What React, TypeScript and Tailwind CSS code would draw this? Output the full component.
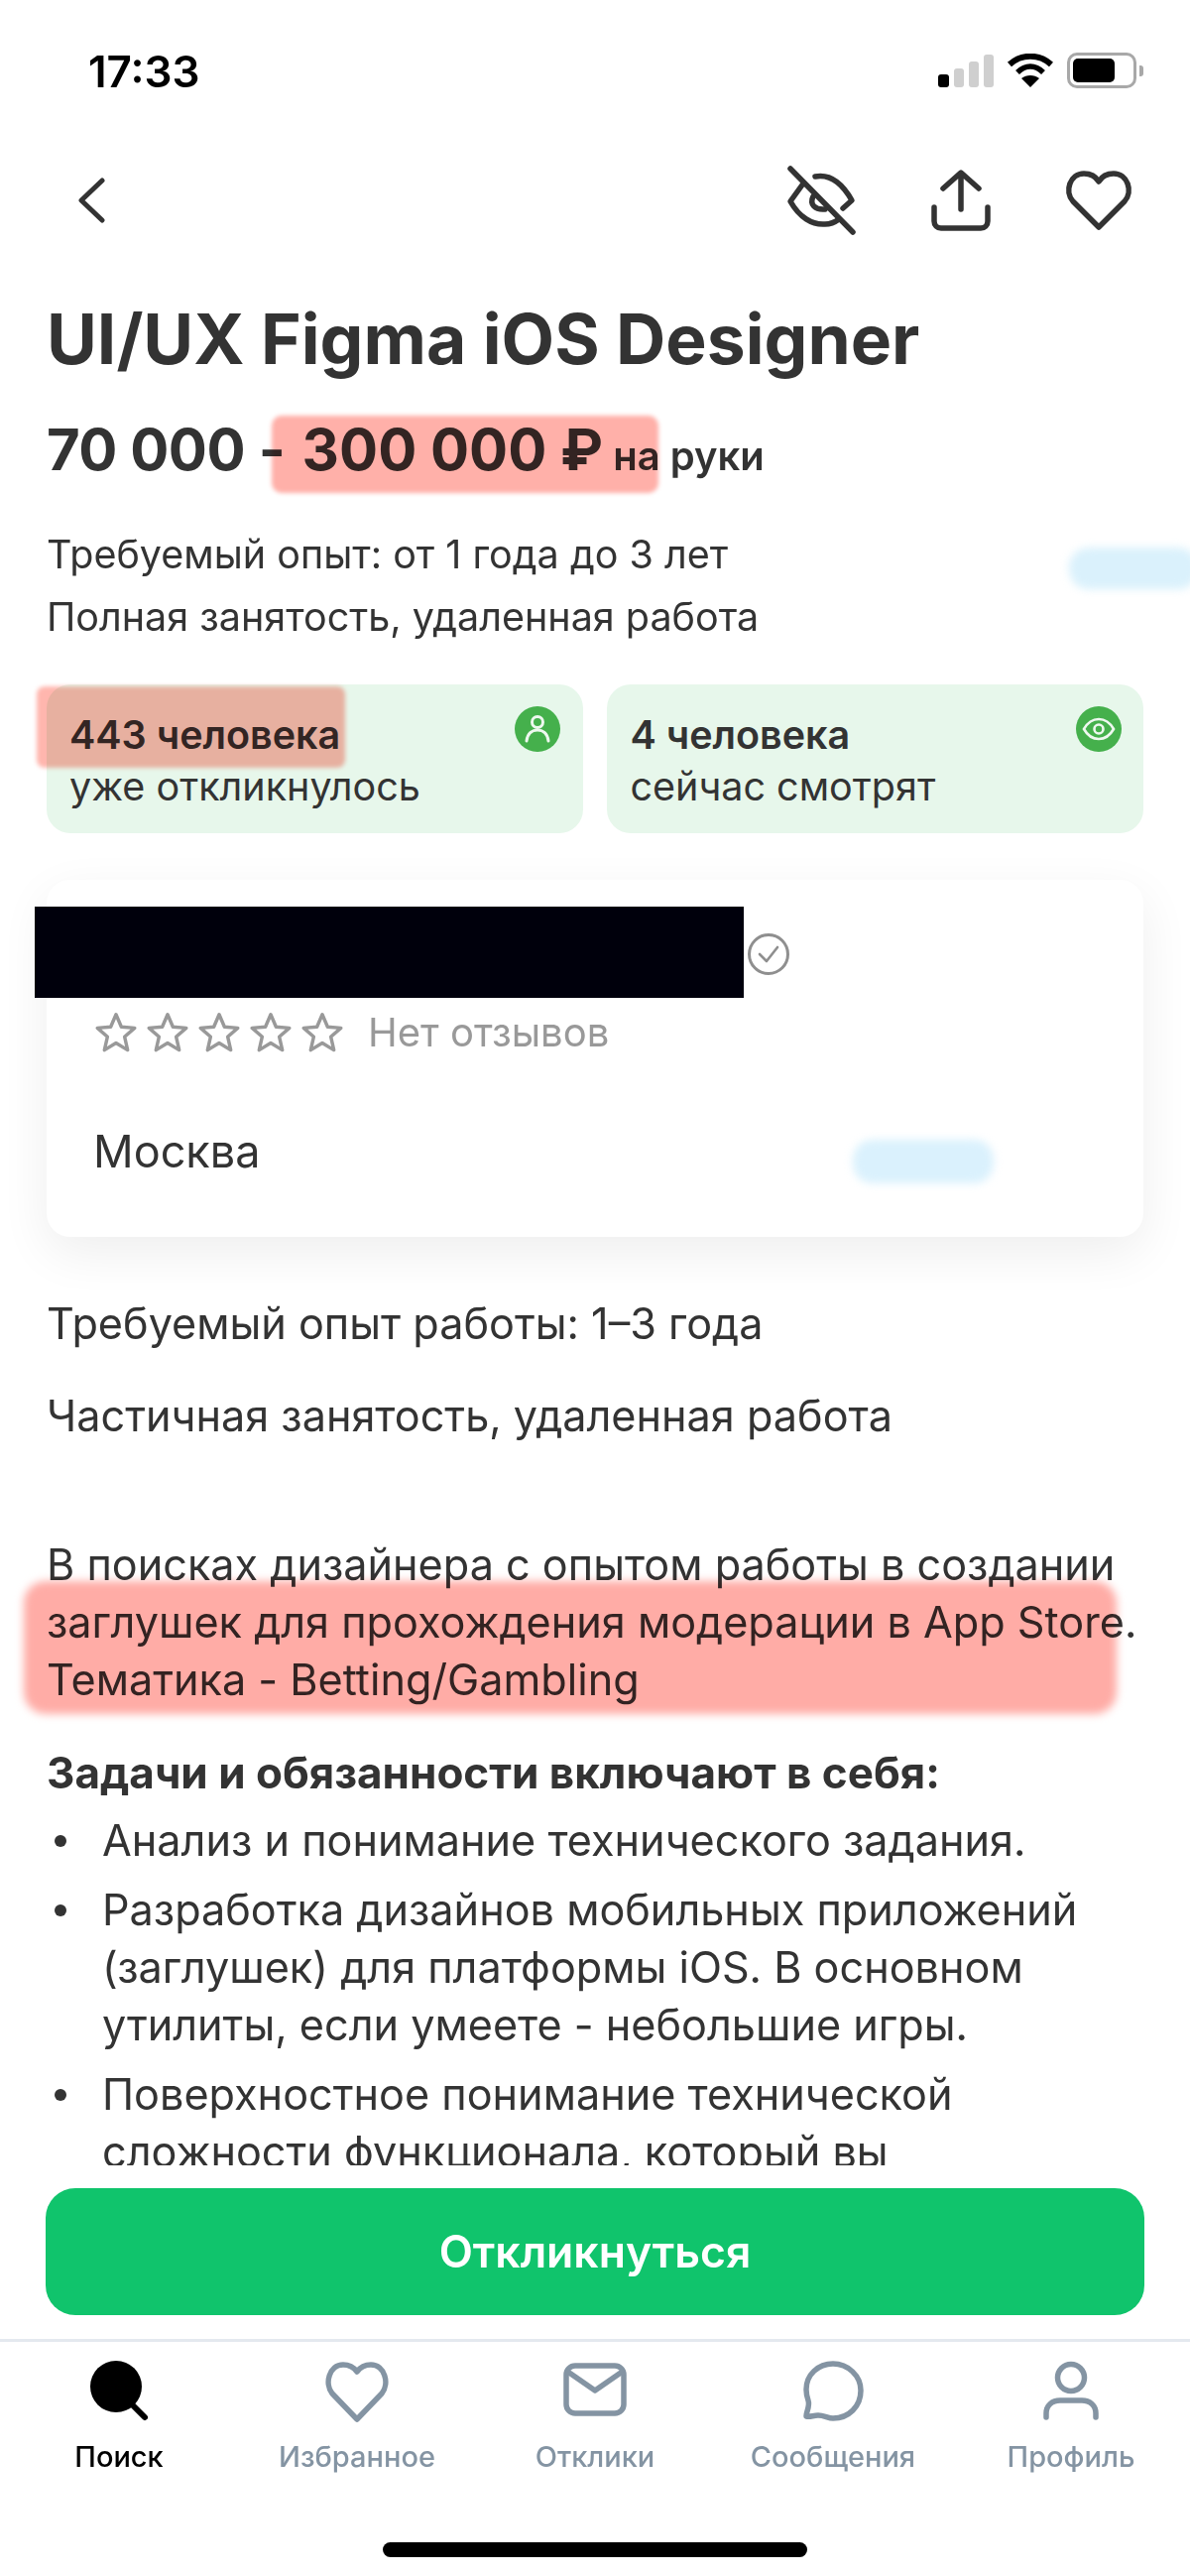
import React from 'react';

const tabs = ['Поиск', 'Избранное', 'Отклики', 'Сообщения', 'Профиль'];

const TabIcon = ({ index }: { index: number }) => {
  if (index === 0) {
    return (
      <svg width="64" height="64" viewBox="0 0 64 64" fill="none">
        <circle cx="29" cy="27" r="26" fill="#000" />
        <path d="M46 46 L58 58" stroke="#000" strokeWidth="6" strokeLinecap="round" />
      </svg>
    );
  }
  if (index === 1) {
    return (
      <svg width="64" height="64" viewBox="0 0 64 64" fill="none" stroke="#8494a3" strokeWidth="5.5" strokeLinejoin="round">
        <path d="M32 60 L7 34 C-1 24 4 5 18 5 C25 5 29 8 32 12 C35 8 39 5 46 5 C60 5 65 24 57 34 Z" />
      </svg>
    );
  }
  if (index === 2) {
    return (
      <svg width="64" height="64" viewBox="0 0 64 64" fill="none" stroke="#8494a3" strokeWidth="5.5" strokeLinejoin="round" strokeLinecap="round">
        <rect x="3" y="6" width="58" height="48" rx="9" />
        <path d="M6 13 L32 31 L58 13" />
      </svg>
    );
  }
  if (index === 3) {
    return (
      <svg width="64" height="64" viewBox="0 0 64 64" fill="none" stroke="#8494a3" strokeWidth="5.5" strokeLinejoin="round">
        <path d="M5 57 C5 52 9 47 7 41 C6 38 5 34 5 30 C5 15 17 4 32 4 C47 4 60 16 60 31 C60 47 48 59 32 59 C27 59 23 56 17 56 C12 56 9 58 5 57 Z" />
      </svg>
    );
  }
  return (
    <svg width="64" height="64" viewBox="0 0 64 64" fill="none" stroke="#8494a3" strokeWidth="5.5" strokeLinecap="round">
      <circle cx="32" cy="18" r="13.5" />
      <path d="M7 58 V54 C7 46 13 41 21 41 H43 C51 41 57 46 57 54 V58" />
    </svg>
  );
};

const Star = () => (
  <svg width="46" height="46" viewBox="0 0 24 24" fill="none" stroke="#999" strokeWidth="1.8" strokeLinejoin="round">
    <path d="M12 2.5 L14.8 9 L21.8 9.6 L16.5 14.2 L18.1 21.2 L12 17.5 L5.9 21.2 L7.5 14.2 L2.2 9.6 L9.2 9 Z" />
  </svg>
);

const Bullet = ({ children }: { children: React.ReactNode }) => (
  <li className="flex">
    <span className="mt-[24px] ml-[8px] w-[12px] h-[12px] shrink-0 rounded-full bg-[#333]" />
    <span className="ml-[36px]">{children}</span>
  </li>
);

export default function App() {
  return (
    <div className="relative w-[1200px] h-[2597px] flex flex-col overflow-hidden bg-white text-[#333] font-['Inter',sans-serif]">
      {/* status bar */}
      <div className="h-[120px] flex items-start justify-between pt-[48px] pl-[89px] pr-[47px]">
        <span className="text-[44px] leading-[48px] font-semibold text-black">17:33</span>
        <div className="flex items-center gap-[14px] pt-[5px]">
          <div className="flex items-end gap-[5px] h-[34px]">
            <div className="w-[11px] h-[13px] rounded-[3px] bg-black" />
            <div className="w-[10px] h-[19px] rounded-[3px] bg-[#cfcfcf]" />
            <div className="w-[10px] h-[26px] rounded-[3px] bg-[#cfcfcf]" />
            <div className="w-[10px] h-[33px] rounded-[3px] bg-[#cfcfcf]" />
          </div>
          <svg width="46" height="34" viewBox="0 0 46 34" fill="none">
            <path d="M2 11 C14 0 32 0 44 11" stroke="#000" strokeWidth="6" />
            <path d="M10 19 C18 11 28 11 36 19" stroke="#000" strokeWidth="5.5" />
            <path d="M23 34 L14 25 C19 21 27 21 32 25 Z" fill="#000" />
          </svg>
          <div className="flex items-center gap-[3px]">
            <div className="w-[70px] h-[36px] rounded-[10px] border-[3px] border-[#a8a8a8] p-[3px]">
              <div className="w-[42px] h-full rounded-[5px] bg-black" />
            </div>
            <div className="w-[4px] h-[11px] rounded-r-[3px] bg-[#a8a8a8]" />
          </div>
        </div>
      </div>

      {/* nav */}
      <div className="h-[164px] flex items-center justify-between pl-[76px] pr-[58px]">
        <svg width="32" height="46" viewBox="0 0 32 46" fill="none" stroke="#333" strokeWidth="5" strokeLinecap="round" strokeLinejoin="round">
          <path d="M27 3 L6 23 L27 43" />
        </svg>
        <div className="flex items-center">
          <svg width="72" height="72" viewBox="0 0 72 72" fill="none" stroke="#333" strokeWidth="5.5" strokeLinecap="round" strokeLinejoin="round">
            <path d="M5 4 L68 68" />
            <path d="M30 12 C46 9 58 20 67 36 L58 44" />
            <path d="M18 19 L5 37 C14 53 27 61 40 60 C46 60 50 58 54 55" />
            <path d="M28 32 C24 40 30 46 40 45" />
          </svg>
          <svg className="ml-[75px]" width="60" height="62" viewBox="0 0 60 62" fill="none" stroke="#333" strokeWidth="5.5" strokeLinecap="round" strokeLinejoin="round">
            <path d="M30 40 V4 M12 19 L30 3 L48 19" />
            <path d="M3 38 V52 C3 56 6 59 10 59 H50 C54 59 57 56 57 52 V38" />
          </svg>
          <svg className="ml-[75px]" width="68" height="62" viewBox="0 0 68 62" fill="none" stroke="#333" strokeWidth="5.5" strokeLinejoin="round">
            <path d="M34 58 L8 32 C-1 22 5 4 19 4 C26 4 31 7 34 12 C37 7 42 4 49 4 C63 4 69 22 60 32 Z" />
          </svg>
        </div>
      </div>

      {/* scroll area */}
      <div className="h-[1899px] overflow-hidden px-[47px] pt-[18px]">
        <h1 className="text-[69.5px] leading-[80px] font-bold whitespace-nowrap">UI/UX Figma iOS Designer</h1>

        <div className="relative mt-[36px] h-[70px] leading-[70px] font-bold whitespace-nowrap">
          <span className="text-[58px] tracking-[-0.5px]">70 000</span>
          <span className="text-[58px]"> - </span>
          <span className="ml-[3px] text-[58px]">300 000 ₽</span>
          <span className="text-[40px] font-semibold"> на руки</span>
          <div className="absolute left-[227px] top-[1px] w-[390px] h-[78px] rounded-[10px] bg-[#ffb0a9] mix-blend-multiply blur-[2px]" />
        </div>

        <div className="mt-[40px] text-[39.5px] leading-[63px]">
          <p>Требуемый опыт: от 1 года до 3 лет</p>
          <p>Полная занятость, удаленная работа</p>
        </div>
        <div className="absolute left-[1078px] top-[552px] w-[130px] h-[42px] rounded-[20px] bg-[#daf1fc] blur-[4px]" />

        <div className="mt-[36px] flex gap-[24px]">
          <div className="relative flex-1 h-[150px] rounded-[24px] bg-[#e7f7eb] pl-[23px] pt-[25px]">
            <p className="text-[39.5px] leading-[52px] font-semibold">443 человека</p>
            <p className="text-[39.5px] leading-[52px]">уже откликнулось</p>
            <div className="absolute right-[23px] top-[22px] w-[46px] h-[46px] rounded-full bg-[#45b04c] flex items-center justify-center">
              <svg width="26" height="30" viewBox="0 0 26 30" fill="none" stroke="#eef8ef" strokeWidth="3" strokeLinecap="round">
                <circle cx="13" cy="8" r="5.5" />
                <path d="M2 27 C3 19 8 16 13 16 C18 16 23 19 24 27" />
              </svg>
            </div>
            <div className="absolute left-[-10px] top-[2px] w-[311px] h-[82px] rounded-[8px] bg-[#ffb6ae] mix-blend-multiply blur-[2px]" />
          </div>
          <div className="relative flex-1 h-[150px] rounded-[24px] bg-[#e7f7eb] pl-[24px] pt-[25px]">
            <p className="text-[39.5px] leading-[52px] font-semibold">4 человека</p>
            <p className="text-[39.5px] leading-[52px]">сейчас смотрят</p>
            <div className="absolute right-[22px] top-[22px] w-[46px] h-[46px] rounded-full bg-[#45b04c] flex items-center justify-center">
              <svg width="34" height="24" viewBox="0 0 34 24" fill="none" stroke="#eef8ef" strokeWidth="2.6">
                <path d="M2 12 C6 5 11 2 17 2 C23 2 28 5 32 12 C28 19 23 22 17 22 C11 22 6 19 2 12 Z" />
                <circle cx="17" cy="12" r="4.5" />
              </svg>
            </div>
          </div>
        </div>

        <div className="relative mt-[47px] h-[360px] rounded-[24px] bg-white shadow-[0_16px_50px_rgba(0,0,0,0.07)] pl-[47px] pt-[130px]">
          <div className="absolute left-[-12px] top-[27px] w-[715px] h-[92px] bg-[#00000c]" />
          <svg className="absolute left-[706px] top-[53px]" width="44" height="44" viewBox="0 0 44 44" fill="none" stroke="#8f8f8f">
            <circle cx="22" cy="22" r="19.5" strokeWidth="3" />
            <path d="M13 22 L20 29 L31 15" strokeWidth="2.6" strokeLinecap="round" strokeLinejoin="round" />
          </svg>
          <div className="flex items-center h-[48px]">
            <div className="flex gap-[6px]">
              <Star />
              <Star />
              <Star />
              <Star />
              <Star />
            </div>
            <span className="ml-[23px] text-[40px] leading-[48px] text-[#999]">Нет отзывов</span>
          </div>
          <p className="mt-[69px] text-[45px] leading-[54px]">Москва</p>
          <div className="absolute left-[813px] top-[262px] w-[142px] h-[44px] rounded-[20px] bg-[#daf1fd] blur-[4px]" />
        </div>

        <div className="text-[43.2px] leading-[58px]">
          <p className="mt-[58px]">Требуемый опыт работы: 1–3 года</p>
          <p className="mt-[35px]">Частичная занятость, удаленная работа</p>
          <div className="relative mt-[92px]">
            <p className="w-[1130px]">В поисках дизайнера с опытом работы в создании заглушек для прохождения модерации в App Store. Тематика - Betting/Gambling</p>
            <div className="absolute left-[-23px] top-[46px] w-[1102px] h-[134px] rounded-[22px] bg-[#ffaca6] mix-blend-multiply blur-[4px]" />
          </div>
          <p className="mt-[36px] text-[44px] font-bold">Задачи и обязанности включают в себя:</p>
          <ul className="mt-[10px] flex flex-col gap-[12px]">
            <Bullet>Анализ и понимание технического задания.</Bullet>
            <Bullet>Разработка дизайнов мобильных приложений (заглушек) для платформы iOS. В основном утилиты, если умеете - небольшие игры.</Bullet>
            <Bullet>Поверхностное понимание технической сложности функционала, который вы</Bullet>
          </ul>
        </div>
      </div>

      {/* action */}
      <div className="pt-[23px] px-[46px]">
        <button className="w-full h-[128px] rounded-[30px] bg-[#10c46c] text-white text-[44.5px] font-semibold">Откликнуться</button>
      </div>

      {/* tab bar */}
      <div className="mt-[24px] border-t-[3px] border-[#e4e9ef] grid grid-cols-5 pt-[18px]">
        {tabs.map((tab, i) => (
          <div key={tab} className="flex flex-col items-center">
            <TabIcon index={i} />
            <span className={i === 0 ? 'mt-[16px] text-[29px] leading-[36px] font-medium text-black' : 'mt-[16px] text-[29px] leading-[36px] font-medium text-[#8494a3]'}>{tab}</span>
          </div>
        ))}
      </div>
      <div className="absolute left-[386px] top-[2563px] w-[428px] h-[15px] rounded-full bg-black" />
    </div>
  );
}
